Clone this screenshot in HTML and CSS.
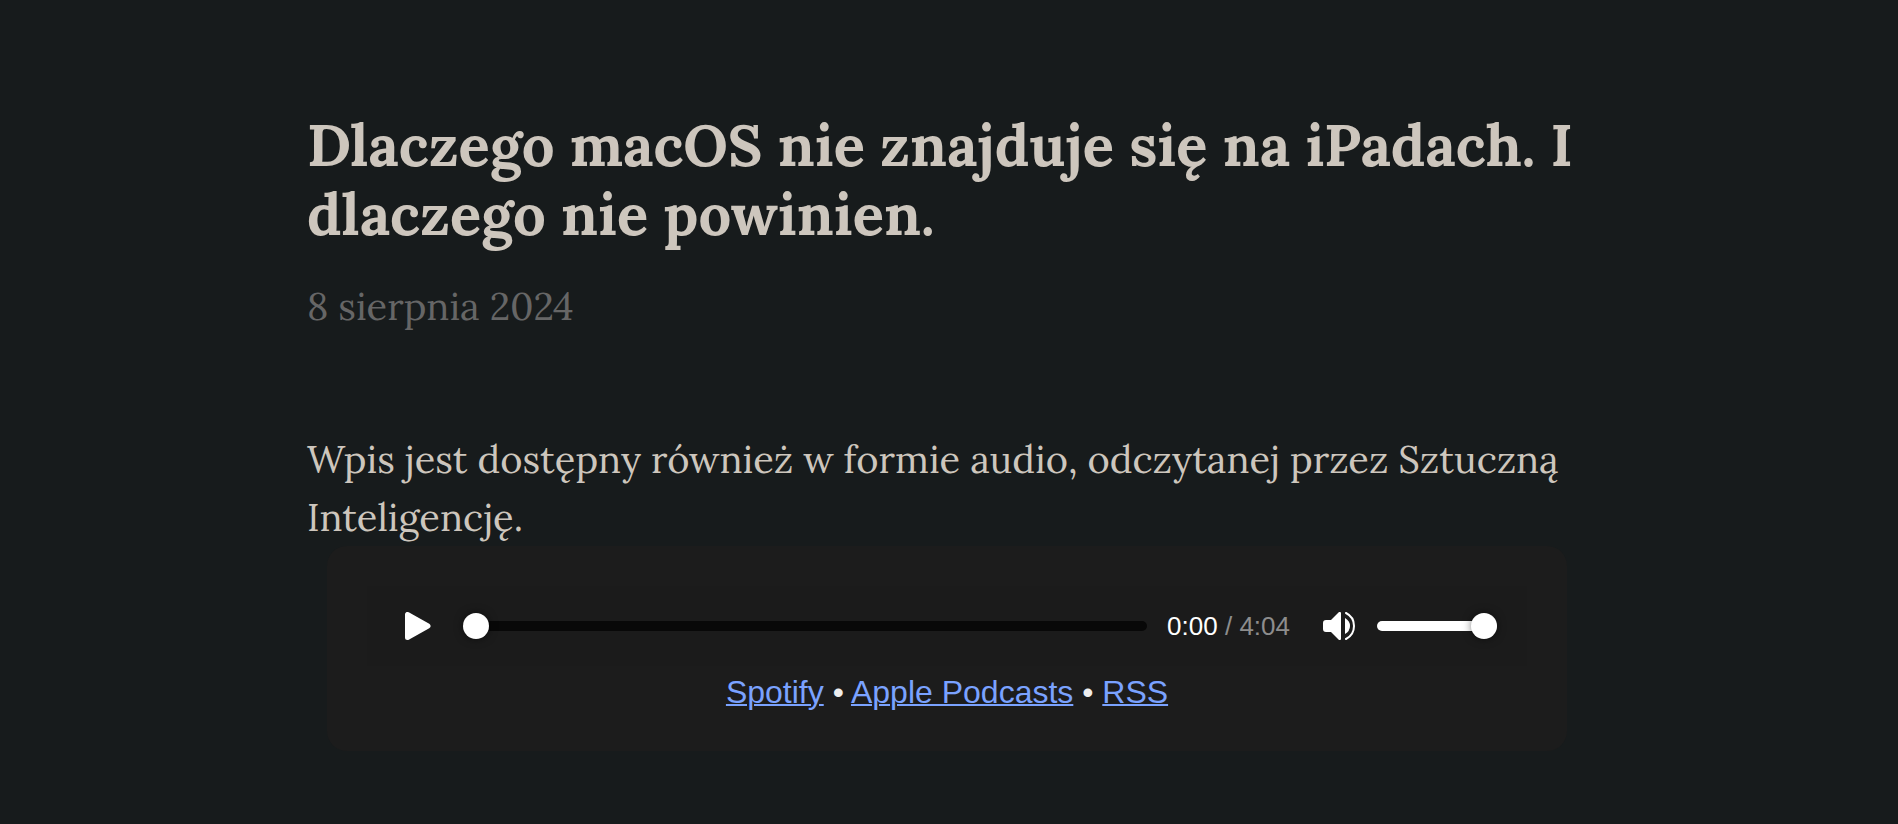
FILE: index.html
```
<!DOCTYPE html>
<html lang="pl">

<head>
    <meta charset="UTF-8">
    <meta name="viewport" content="width=device-width, initial-scale=1.0">
    <title>Dlaczego macOS nie znajduje się na iPadach. I dlaczego nie powinien.</title>
    <link rel="stylesheet" href="styles.css">
</head>

<body>
    <article class="post">
        <header class="post-header">
            <h1>Dlaczego macOS nie znajduje się na iPadach. I dlaczego nie powinien.</h1>
            <time class="post-date" datetime="2024-08-08">8 sierpnia 2024</time>
        </header>
        <p class="intro">Wpis jest dostępny również w formie audio, odczytanej przez Sztuczną Inteligencję.</p>
        <section class="podcast">
            <div class="player">
                <button class="icon-btn play-btn" type="button" aria-label="Odtwórz">
                    <svg width="26" height="28" viewBox="0 0 26 28">
                        <path d="M2.5 2.5v23L23 14z" fill="#fff" stroke="#fff" stroke-width="5" stroke-linejoin="round" />
                    </svg>
                </button>
                <input class="slider seek" type="range" min="0" max="244" value="0" aria-label="Pozycja">
                <div class="time">0:00 <span class="duration">/ 4:04</span></div>
                <button class="icon-btn" type="button" aria-label="Wycisz">
                    <svg width="32" height="28" viewBox="0 0 32 28">
                        <path d="M16 0h1q1 0 1 1v26q0 1-1 1h-1L8 20H3q-3 0-3-3v-6q0-3 3-3h5z" fill="#fff" />
                        <path d="M22 6q5 3 5 8t-5 8z" fill="#fff" />
                        <path d="M23 1q8 4 8 13t-8 13" fill="none" stroke="#fff" stroke-width="2" stroke-linecap="round" />
                    </svg>
                </button>
                <input class="slider volume" type="range" min="0" max="100" value="100" aria-label="Głośność">
            </div>
            <div class="links">
                <a href="#">Spotify</a> • <a href="#">Apple Podcasts</a> • <a href="#">RSS</a>
            </div>
        </section>
    </article>
</body>

</html>
```
FILE: styles.css
```
body {
    margin: 0;
    padding: 0 4px 0 0;
    background: #171b1c;
    color: #cdc6bd;
    font-family: Lora, "Liberation Serif", serif;
}

.post {
    max-width: 1280px;
    margin: 0 auto;
    padding-top: 111px;
}

h1 {
    margin: 0;
    font-size: 58px;
    line-height: 69px;
    font-weight: bold;
}

.post-date {
    display: block;
    margin-top: 28px;
    font-size: 38px;
    line-height: 58px;
    color: #666;
}

.intro {
    margin: 95px 0 0;
    font-size: 38px;
    line-height: 58px;
}

.podcast {
    margin: 0 20px;
    padding: 40px;
    border-radius: 20px;
    background: #1c1c1c;
    color: #eee;
    font-family: Helvetica, "Liberation Sans", sans-serif;
}

.player {
    display: flex;
    align-items: center;
    height: 80px;
    padding: 0 30px 0 38px;
    background: #1b1b1b;
}

.icon-btn {
    display: flex;
    padding: 0;
    border: none;
    background: none;
    cursor: pointer;
}

.play-btn {
    margin-right: 32px;
}

/* range inputs share one round white thumb */
.slider {
    -webkit-appearance: none;
    appearance: none;
    height: 10px;
    margin: 0;
    border-radius: 5px;
    cursor: pointer;
}

.slider::-webkit-slider-thumb {
    -webkit-appearance: none;
    appearance: none;
    width: 26px;
    height: 26px;
    border-radius: 50%;
    background: #fff;
    box-shadow: 0 0 8px rgba(0, 0, 0, 0.5);
}

.seek {
    flex: 1;
    min-width: 0;
    background: #080808;
}

.volume {
    width: 120px;
    margin-left: 22px;
    background: #fff;
}

.time {
    margin: 0 33px 0 20px;
    font-size: 26px;
    color: #fff;
    white-space: nowrap;
}

.duration {
    color: #8d8d8d;
}

.links {
    margin-top: 8px;
    font-size: 32px;
    line-height: 37px;
    text-align: center;
}

.links a {
    color: #7aa2ff;
    text-decoration: underline;
    text-decoration-thickness: 2px;
}
```
